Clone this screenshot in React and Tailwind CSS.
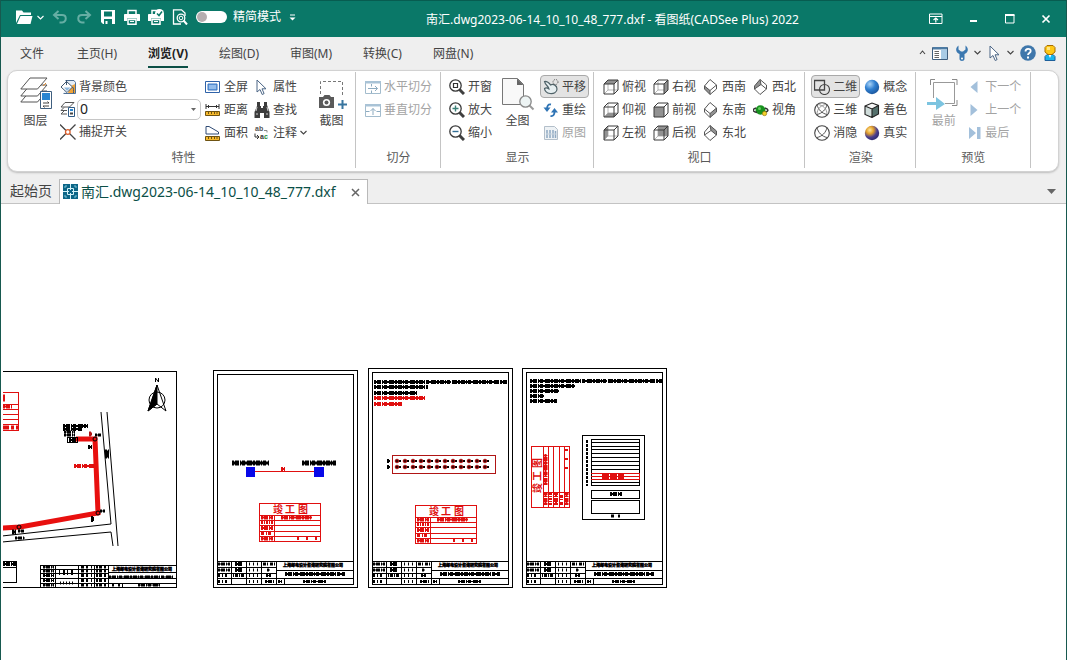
import React, { useState } from "react";
import clsx from "clsx";

const MENUS = ["主页(H)", "浏览(V)", "绘图(D)", "审图(M)", "转换(C)", "网盘(N)"];

const FILE_NAME = "南汇.dwg2023-06-14_10_10_48_777.dxf";

/* ---------- icons ---------- */

const Icon = ({ size = 16, width, className, children }) => (
  <svg
    width={width ?? size}
    height={size}
    viewBox={`0 0 ${width ?? size} ${size}`}
    fill="none"
    className={clsx("shrink-0", className)}
    aria-hidden="true"
  >
    {children}
  </svg>
);

const Chevron = ({ up, className }) => (
  <Icon size={7} className={className}>
    <path d={up ? "M1 5l2.500-3L6 5" : "M.5 2l3 3 3-3"} stroke="currentColor" strokeWidth="1.100" />
  </Icon>
);

const FolderIcon = () => (
  <Icon width={17}>
    <path d="M0 14V1.500h6L7.500 3.500H15V6H4z" fill="#fff" />
    <path d="M4.500 7H16.500L14.500 15H1z" fill="#fff" />
  </Icon>
);

const UndoIcon = ({ flip }) => (
  <Icon className={flip ? "-scale-x-100" : undefined}>
    <path d="M6.500 2L2 6l4.500 4M2.500 6H10c5 0 5 6.500 0 7.500H7.500" stroke="#66aea4" strokeWidth="2" />
  </Icon>
);

const SaveIcon = () => (
  <Icon>
    <path d="M1 1h14v14H3l-2-2z" fill="#fff" />
    <path d="M4 2.500h8v5H4zM4 10h8v5H4z" fill="#0a7868" />
    <path d="M5.500 12h2v3h-2z" fill="#fff" />
  </Icon>
);

const PrintIcon = ({ checked }) => (
  <Icon>
    <path d="M4 5V1.500h8V5" stroke="#fff" strokeWidth="1.500" />
    <path d="M1 5h14c.6 0 1 .4 1 1v6h-3V9.500H3V12H0V6c0-.6.4-1 1-1z" fill="#fff" />
    <path d="M4 10.500h8v4.700H4z" stroke="#fff" strokeWidth="1.500" />
    <path d="M6 12.500h4" stroke="#fff" />
    {checked && (
      <>
        <circle cx="11.500" cy="4.500" r="4.500" fill="#fff" />
        <path d="M9 4.500l2 2 3-4" stroke="#0a7868" strokeWidth="1.500" />
      </>
    )}
  </Icon>
);

const PreviewIcon = () => (
  <Icon>
    <path d="M9 15H1.500V.8h8L13 4v3" stroke="#fff" strokeWidth="1.300" />
    <circle cx="9" cy="9" r="3.800" stroke="#fff" strokeWidth="1.300" />
    <circle cx="9" cy="9" r="1.800" stroke="#fff" />
    <path d="M11.500 11.500l3.500 4" stroke="#fff" strokeWidth="2" />
  </Icon>
);

const RibbonToggleIcon = () => (
  <Icon width={14} size={12}>
    <path d="M.5 1h12.500v9.500H.5zM.5 3.500H13" stroke="#fff" />
    <path d="M6.800 9.500v-4M4.500 7l2.300-2 2.200 2" stroke="#fff" strokeWidth="1.200" />
  </Icon>
);

const PanelIcon = () => (
  <Icon>
    <path d="M.5 2.500h15v12H.5z" fill="#fff" stroke="#3f5f7f" />
    <path d="M1 2h14v2.500H1z" fill="#4d7ba3" />
    <path d="M9 4.500h6v9.500H9z" fill="#a9cce6" />
    <path d="M2.500 6.500H7M2.500 8.500H7M2.500 10.500H7M2.500 12.500H7" stroke="#666" />
  </Icon>
);

const WrenchIcon = () => (
  <Icon>
    <path
      d="M4.500.5v4L7 6.500h2l2.500-2v-4C15 3 14.500 7.500 10.500 9v5c0 2.500-5 2.500-5 0V9C1.500 7.500 1 3 4.500.5z"
      fill="#3b78b0"
    />
    <circle cx="8" cy="13.500" r="1" fill="#fff" />
  </Icon>
);

const CursorIcon = () => (
  <Icon>
    <path d="M3 1v12l3-2.500 2.200 5 1.900-.9-2.100-4.800H12z" fill="#fff" stroke="#4b6585" strokeLinejoin="round" />
  </Icon>
);

const HelpIcon = () => (
  <Icon>
    <circle cx="8" cy="8" r="7.800" fill="#3f77ab" />
    <path d="M5.500 6.500c0-3.500 5.200-3.500 5.200-.5C10.700 8 8 8 8 10" stroke="#fff" strokeWidth="1.800" />
    <path d="M7 11.500h2v2H7z" fill="#fff" />
  </Icon>
);

const PersonIcon = () => (
  <Icon>
    <path d="M3 15.500v-4l2-2h6l2 2v4z" fill="#19b5ee" stroke="#1c5f9b" />
    <path d="M6.500 9.500L8 13l1.500-3.500z" fill="#fff" />
    <path d="M5 .5h6l2 2V7l-3 2.500H6L3 7V2.500z" fill="#ffc815" stroke="#a86f00" />
    <path d="M5 2h3v3H5z" fill="#ffe684" />
  </Icon>
);

const LayersIcon = () => (
  <Icon size={32} className="overflow-visible">
    {[14, 8, 1].map((y) => (
      <path key={y} d={`M10 ${y}h17l-9.500 11H.8z`} fill="#fff" stroke="#555" />
    ))}
    <path d="M20.500 14.500h11v17h-11z" fill="#fff" stroke="#3f5f7f" />
    <path d="M22 16h8v7h-8z" fill="#2a86d1" />
    <path d="M23 26h6l-1.500-1.500M29 29h-6l1.500 1.500" stroke="#444" />
    <path d="M23 9l3-3" stroke="#e58a2b" />
  </Icon>
);

const PaintIcon = () => (
  <Icon>
    <path d="M5.500 1.500H14l1.500 2v11h-12" fill="#e6eef6" stroke="#4f6f94" />
    <path d="M11 7l4-2v9h-7z" fill="#f0a43a" />
    <path d="M6.500 2.500l6 5.500-5.500 5.500L1 8z" fill="#fff" stroke="#3f5670" />
    <path d="M4 8.500h6.500l-3.500 3.500z" fill="#8fb8dd" />
    <path d="M6.500 1v5M12.500 8c1.500 1 1 4 1 6" stroke="#3f5670" />
  </Icon>
);

const LayerListIcon = () => (
  <Icon>
    <path d="M5 1.500h9L9.500 6H1zM1 9.500h6M4 6.500l-3 3M1 13h6M4 10l-3 3" stroke="#555" />
    <path d="M8.500 6.500h6v9h-6z" fill="#fff" stroke="#2f5a85" />
    <path d="M10 8h3v2h-3z" fill="#2a86d1" />
    <path d="M10 12.500h3" stroke="#444" strokeWidth="2" />
  </Icon>
);

const SnapIcon = () => (
  <Icon>
    <path d="M0 .5l6 6M15.500.5l-6 6M0 15.500l6-6M15.500 15.500l-6-6" stroke="#444" strokeWidth="1.300" />
    <circle cx="7.800" cy="8" r="2.300" stroke="#e0602c" strokeWidth="1.300" />
  </Icon>
);

const FullScreenIcon = () => (
  <Icon>
    <path d="M.5 2.500h14v11H.5z" fill="#fff" stroke="#2f62a8" />
    <path d="M3 5h9v6H3z" fill="#6fa5e3" stroke="#3b74bf" />
    <path d="M4 7h7M4 9h7" stroke="#b8d5f4" />
  </Icon>
);

const Ruler = ({ y }) => (
  <>
    <path d={`M.5 ${y}.5h14v4H.5z`} fill="#f6b92d" stroke="#6e5312" />
    <path d={`M3.500 ${y + 1}v2M6.500 ${y + 1}v2M9.500 ${y + 1}v2M12 ${y + 1}v2`} stroke="#6e5312" />
  </>
);

const DistanceIcon = () => (
  <Icon>
    <path d="M1 4.500h13M1 2v5M14 2v5M3.500 3v3M11.500 3v3" stroke="#333" />
    <Ruler y={9} />
  </Icon>
);

const AreaIcon = () => (
  <Icon>
    <path d="M1 9V1.500h3L13.500 7v2z" fill="#fff" stroke="#2f4a74" />
    <Ruler y={11} />
  </Icon>
);

const BinocularsIcon = () => (
  <Icon>
    <path d="M3 0h3v4h1v2h2V4h1V0h3v3l2.500 7v6H10v-5H6v5H.5v-6L3 4z" fill="#3c3c3c" />
    <path d="M3 5l-1 4M13 5l1 4M2 12h2M12 12h2" stroke="#cfcfcf" />
  </Icon>
);

const NoteIcon = () => (
  <Icon className="overflow-visible">
    <g className="font-['Liberation_Sans',sans-serif] text-[7px] font-bold">
      <text x="1" y="6" fill="#555">ab</text>
      <text x="6" y="14" fill="#333">
        a<tspan fill="#1b8a36">c</tspan>
      </text>
    </g>
    <path d="M1 8.500V12h3.500M3 10l2 2-2 2" stroke="#333" />
    <path d="M10 5.500h3v2" stroke="#888" />
  </Icon>
);

const CaptureIcon = () => (
  <Icon size={32} className="overflow-visible">
    <path d="M4.500 17V4.500h22V20" stroke="#777" strokeDasharray="3 2" />
    <path d="M3 20h4l1.500-2h5l1.500 2h3v11H3z" fill="#5a5a5a" />
    <circle cx="10.500" cy="25.500" r="3.600" fill="#fff" />
    <circle cx="10.500" cy="25.500" r="2" fill="#5a5a5a" />
    <path d="M26.500 23v9M22 27.500h9" stroke="#39759f" strokeWidth="2" />
  </Icon>
);

const SplitIcon = ({ vertical }) => (
  <Icon>
    <path d="M.5 2.500h15v12H.5z" fill="#fff" stroke="#a3bccd" />
    <path d="M0 2h16v2.500H0z" fill="#a9c3d6" />
    {vertical ? (
      <path d="M1 9.500h3.500M11.500 9.500H15M8 13V6.500M5.500 9L8 6.500 10.500 9" stroke="#8dabc0" />
    ) : (
      <path d="M6.500 5v2.500M6.500 11.500V14M3 9.500h9.500M10 7l2.500 2.500L10 12" stroke="#8dabc0" />
    )}
  </Icon>
);

const ZoomIcon = ({ kind }) => (
  <Icon>
    <path d="M10.500 10.500l4.500 4.500" stroke="#3f3f3f" strokeWidth="3" />
    <circle cx="6.500" cy="6.500" r="5.700" fill="#fff" stroke="#3a3a3a" strokeWidth="1.300" />
    {kind === "window" && <path d="M4.500 4.500h4v4h-4z" stroke="#333" strokeWidth="1.200" />}
    {kind === "in" && <path d="M3.500 6.500h6M6.500 3.500v6" stroke="#3c8078" strokeWidth="1.400" />}
    {kind === "out" && <path d="M3.500 6.500h6" stroke="#336f96" strokeWidth="1.400" />}
  </Icon>
);

const FitPageIcon = () => (
  <Icon size={32} className="overflow-visible">
    <path d="M.5 1.500h15l6 6v20H.5z" fill="#f8f8f8" stroke="#777" />
    <path d="M15 1.500v6.500h6.500z" fill="#666" />
    <path d="M27.500 28.500l4 4" stroke="#999" strokeWidth="2" />
    <circle cx="23.500" cy="24.500" r="5.700" fill="#edf4f4" stroke="#888" strokeWidth="1.300" />
  </Icon>
);

const PanIcon = () => (
  <Icon>
    <path
      d="M1.500 2.500c2-.5 5 1.500 6 3.500 3-1.500 6.500.5 6.500 4 0 3.500-3.500 5-7 4.500C3.500 14 1.500 11.500 1.500 9.500 3 8.500 4.500 9 6 10c0-2.500-4-4-4.500-7.500z"
      fill="#e6eef0"
      stroke="#4f6268"
      strokeWidth="1.200"
    />
    <circle cx="12.500" cy="3" r="2.500" stroke="#555" strokeDasharray="1 1" />
  </Icon>
);

const RedrawIcon = () => (
  <Icon>
    <path d="M8 2.500C5 2 4 4 4 7" stroke="#2f74b5" strokeWidth="1.800" />
    <path d="M.5 5.500h7L4 10z" fill="#2f74b5" />
    <path d="M7.500 14c3 .5 4-1.500 4-4.500" stroke="#2f74b5" strokeWidth="1.800" />
    <path d="M8 10.500h7L11.500 6z" fill="#2f74b5" />
  </Icon>
);

const OriginalIcon = () => (
  <Icon>
    <path d="M1.500 1.500h10l3 3v10h-13z" fill="#eef2f5" stroke="#b3bfca" />
    <path d="M4 5v8M7 5v8M10 5v8M12.500 6v7" stroke="#8fa9c2" strokeWidth="1.500" />
    <path d="M3 9h10" stroke="#c9d4de" />
  </Icon>
);

const CUBE_FACES = {
  top: "M1 5l4-4h10l-4 4z",
  bottom: "M1 15l4-4h10l-4 4z",
  left: "M1 5l4-4v10l-4 4z",
  right: "M11 5l4-4v10l-4 4z",
  front: "M1 5h10v10H1z",
  back: "M5 1h10v10H5z",
};

const CubeIcon = ({ face }) => (
  <Icon>
    <path d="M1 5h10v10H1zM1 5l4-4h10l-4 4M15 1v10l-4 4" fill="#fff" />
    <path d={CUBE_FACES[face]} fill="#929292" />
    {face !== "front" && <path d="M5 1v10M5 11h10M5 11l-4 4" stroke="#999" strokeWidth=".7" />}
    <path d="M1 5h10v10H1zM1 5l4-4h10l-4 4M15 1v10l-4 4" stroke="#3a3a3a" />
  </Icon>
);

const ISO_SHADES = {
  sw: "M1.500 7L7 11.500v4L1.500 10z",
  se: "M7 11.500L13.500 6v4L7 15.500z",
  ne: "M7 .5L13.500 6v4L8 5.500z",
  nw: "M7 .5L1.500 7v3L8 5.500z",
};

const IsoIcon = ({ corner }) => {
  const below = corner === "sw" || corner === "se";
  return (
    <Icon>
      <path d="M7 .5L13.500 6v4L7 15.500 1.500 10V7z" fill="#fff" />
      <path d={ISO_SHADES[corner]} fill="#929292" />
      <path
        d={below ? "M1.500 7L7 11.500 13.500 6M7 11.500v4" : "M1.500 10L8 5.500l5.500 4.500M8 5.500L7 .5"}
        stroke="#555"
      />
      <path d="M7 .5L13.500 6v4L7 15.500 1.500 10V7z" stroke="#555" />
    </Icon>
  );
};

const OrbitIcon = () => (
  <Icon>
    <ellipse cx="7.500" cy="8" rx="5" ry="4.700" fill="#18911f" />
    <circle cx="6.500" cy="6.500" r="1.500" fill="#66d05d" />
    <path d="M3 6C-1.500 7.500-.5 9.500 4 10.500M12 6c4.500 1.500 3.500 3.500-1 4.500" stroke="#333" strokeWidth="1.400" />
    <circle cx="11.500" cy="11.500" r="2.200" fill="#f4cf2c" stroke="#806b00" strokeWidth=".6" />
  </Icon>
);

const TwoDIcon = () => (
  <Icon>
    <circle cx="10.500" cy="10.500" r="5" stroke="#444" strokeWidth="1.100" />
    <path d="M.5 1.500h10v9.500H.5z" stroke="#444" strokeWidth="1.300" />
  </Icon>
);

const WireIcon = ({ hidden }) => (
  <Icon>
    <circle cx="8" cy="8" r="7.300" stroke="#444" strokeWidth="1.100" />
    <path d="M3 2.500c1 5 5 9 10 10M13 2.500c-1 5-5 9-10 10" stroke="#555" />
    {!hidden && <path d="M3 12c0-5 4-9 9-9.500M13 12c0-5-4-9-9-9.500" stroke="#999" />}
  </Icon>
);

const BallIcon = ({ id, stops }) => (
  <Icon>
    <defs>
      <radialGradient id={id} cx="0.350" cy="0.300" r="0.750">
        {stops.map((c, i) => (
          <stop key={c} offset={i / (stops.length - 1)} stopColor={c} />
        ))}
      </radialGradient>
    </defs>
    <circle cx="8" cy="8" r="7.200" fill={`url(#${id})`} />
  </Icon>
);

const ShadedCubeIcon = () => (
  <Icon>
    <path d="M1 4l7-3 6.500 2.500L8 7z" fill="#f7f7f7" />
    <path d="M1 4l7 3v8.500l-7-3z" fill="#cfdcda" />
    <path d="M8 7l6.500-3.500v8.500L8 15.500z" fill="#54706c" />
    <path d="M1 4l7-3 6.500 2.500v8.500L8 15.500l-7-3zM1 4l7 3 6.500-3.500M8 7v8.500" stroke="#222" strokeWidth="1.100" />
  </Icon>
);

const FirstIcon = () => (
  <Icon size={32} className="overflow-visible">
    <path d="M2.500 8V2.500H7M24 2.500h5V8M29 23v5.500h-5" stroke="#8a8a8a" />
    <path d="M5.500 21V5.500h21v21H17" stroke="#999" />
    <path d="M-1 25h9v-5l9 7-9 6v-5h-9z" fill="#7cc4e0" />
  </Icon>
);

const StepIcon = ({ kind }) => (
  <Icon width={13} size={12}>
    {kind === "next" && <path d="M8.500 0v12L1.500 6z" fill="#a3c0db" />}
    {kind === "prev" && <path d="M1.500 0v12l7-6z" fill="#a3c0db" />}
    {kind === "last" && <path d="M0 0v12l7-6zM8 0h3.500v12H8z" fill="#a3c0db" />}
  </Icon>
);

const DocIcon = () => (
  <Icon>
    <path d="M0 0h15v15H0z" fill="#0c6687" />
    <path d="M4.500 4.500h6v6h-6zM7.500 0v6M7.500 9v6M0 7.500h6M9 7.500h6" stroke="#d4f2f8" />
    <path d="M2 4V2h2M11 2h2v2M13 11v2h-2M4 13H2v-2" stroke="#7fc5d8" />
  </Icon>
);

/* ---------- ribbon ---------- */

const RibbonGroup = ({ label, className, children }) => (
  <section className={clsx("mt-px mb-[3px] flex flex-col border-r border-[#c4c4c4] pt-[3px]", className)}>
    <div className="flex gap-px">{children}</div>
    <h2 className="flex h-6 items-center justify-center pt-1 text-[#5a5a5a]">{label}</h2>
  </section>
);

const Column = ({ className, children }) => <div className={clsx("flex flex-col", className)}>{children}</div>;

const Tool = ({ icon, label, active, disabled, menu }) => (
  <button
    type="button"
    disabled={disabled}
    className={clsx(
      "flex h-[23px] items-center gap-[3px] rounded border px-[2px] whitespace-nowrap",
      active ? "border-[#a9a9a9] bg-[#e3e3e3]" : "border-transparent",
      disabled ? "text-[#a3a3a3]" : "text-[#444]"
    )}
  >
    {icon}
    {label}
    {menu && <Chevron />}
  </button>
);

const BigTool = ({ icon, label, disabled }) => (
  <button
    type="button"
    disabled={disabled}
    className={clsx("flex w-[43px] flex-col items-center gap-[2px] pt-[2px]", disabled ? "text-[#a3a3a3]" : "text-[#444]")}
  >
    {icon}
    <span className="leading-5">{label}</span>
  </button>
);

const Ribbon = () => (
  <div className="mr-[7px] ml-[6px] flex rounded-[10px] border border-[#d2d2d2] bg-white shadow-[0_1px_2px_#bdbdbd]">
    <RibbonGroup label="特性" className="pr-[2px] pl-[6px]">
      <div className="flex">
        <BigTool icon={<LayersIcon />} label="图层" />
        <Column className="w-36">
          <Tool icon={<PaintIcon />} label="背景颜色" />
          <div className="flex h-[22px] items-center gap-px pl-[3px]">
            <LayerListIcon />
            <div className="flex h-[21px] flex-1 items-center rounded-[5px] border border-[#c6c6c6] bg-white pr-1">
              <select aria-label="当前图层" className="flex-1 appearance-none pl-[2px] text-sm leading-4 text-[#222]">
                <option>0</option>
              </select>
              <Icon width={5} size={3}>
                <path d="M0 0h5L2.500 3z" fill="#666" />
              </Icon>
            </div>
          </div>
          <Tool icon={<SnapIcon />} label="捕捉开关" />
        </Column>
      </div>
      <div className="flex">
        <Column>
          <Tool icon={<FullScreenIcon />} label="全屏" />
          <Tool icon={<DistanceIcon />} label="距离" />
          <Tool icon={<AreaIcon />} label="面积" />
        </Column>
        <Column className="w-[58px]">
          <Tool icon={<CursorIcon />} label="属性" />
          <Tool icon={<BinocularsIcon />} label="查找" />
          <Tool icon={<NoteIcon />} label="注释" menu />
        </Column>
      </div>
      <BigTool icon={<CaptureIcon />} label="截图" />
    </RibbonGroup>

    <RibbonGroup label="切分" className="pr-[5px] pl-[6px]">
      <Column>
        <Tool icon={<SplitIcon />} label="水平切分" disabled />
        <Tool icon={<SplitIcon vertical />} label="垂直切分" disabled />
        <div className="h-[23px]" />
      </Column>
    </RibbonGroup>

    <RibbonGroup label="显示" className="pr-[4px] pl-[5px]">
      <Column>
        <Tool icon={<ZoomIcon kind="window" />} label="开窗" />
        <Tool icon={<ZoomIcon kind="in" />} label="放大" />
        <Tool icon={<ZoomIcon kind="out" />} label="缩小" />
      </Column>
      <BigTool icon={<FitPageIcon />} label="全图" />
      <Column>
        <Tool icon={<PanIcon />} label="平移" active />
        <Tool icon={<RedrawIcon />} label="重绘" />
        <Tool icon={<OriginalIcon />} label="原图" disabled />
      </Column>
    </RibbonGroup>

    <RibbonGroup label="视口" className="pr-[5px] pl-[6px]">
      <Column>
        <Tool icon={<CubeIcon face="top" />} label="俯视" />
        <Tool icon={<CubeIcon face="bottom" />} label="仰视" />
        <Tool icon={<CubeIcon face="left" />} label="左视" />
      </Column>
      <Column>
        <Tool icon={<CubeIcon face="right" />} label="右视" />
        <Tool icon={<CubeIcon face="front" />} label="前视" />
        <Tool icon={<CubeIcon face="back" />} label="后视" />
      </Column>
      <Column>
        <Tool icon={<IsoIcon corner="sw" />} label="西南" />
        <Tool icon={<IsoIcon corner="se" />} label="东南" />
        <Tool icon={<IsoIcon corner="ne" />} label="东北" />
      </Column>
      <Column>
        <Tool icon={<IsoIcon corner="nw" />} label="西北" />
        <Tool icon={<OrbitIcon />} label="视角" />
      </Column>
    </RibbonGroup>

    <RibbonGroup label="渲染" className="pr-[5px] pl-[6px]">
      <Column>
        <Tool icon={<TwoDIcon />} label="二维" active />
        <Tool icon={<WireIcon />} label="三维" />
        <Tool icon={<WireIcon hidden />} label="消隐" />
      </Column>
      <Column>
        <Tool icon={<BallIcon id="ball-blue" stops={["#a9d3f7", "#2f7fd0", "#1b559b"]} />} label="概念" />
        <Tool icon={<ShadedCubeIcon />} label="着色" />
        <Tool icon={<BallIcon id="ball-gold" stops={["#ffe9a0", "#e3a02c", "#4b3f8f", "#2c2a6b"]} />} label="真实" />
      </Column>
    </RibbonGroup>

    <RibbonGroup label="预览" className="pr-[6px] pl-[6px]">
      <BigTool icon={<FirstIcon />} label="最前" disabled />
      <Column>
        <Tool icon={<StepIcon kind="next" />} label="下一个" disabled />
        <Tool icon={<StepIcon kind="prev" />} label="上一个" disabled />
        <Tool icon={<StepIcon kind="last" />} label="最后" disabled />
      </Column>
    </RibbonGroup>
  </div>
);

/* ---------- drawing ---------- */

// A line of CAD annotation, far too small to read at this zoom
const Scrawl = ({ x, y, w, h = 3, color = "#000", dash }) => (
  <g stroke={color} shapeRendering="auto">
    <path d={`M${x} ${y}h${w}`} strokeWidth={h + 1} strokeDasharray={dash ?? "2 1 4 1 1 1 3 2 5 1"} />
    {!dash && <path d={`M${x} ${y}h${w}`} strokeWidth={h - 1} strokeDasharray="7 1 4 0 9 1 3 1" />}
  </g>
);

const Stamp = ({ transform }) => (
  <g transform={transform} stroke="#e00f0f">
    <path d="M0 0h61v38H0zM0 12h61M0 17h61M0 22h61M0 28h61M0 33h61M15 12v26" />
    <g fill="#e00f0f" stroke="none" className="text-[10px] font-bold">
      <text x="14" y="10">竣</text>
      <text x="26" y="10">工</text>
      <text x="39" y="10">图</text>
    </g>
    <Scrawl x={2} y={14.500} w={12} color="#e00f0f" />
    <Scrawl x={2} y={19.500} w={12} h={2} color="#e00f0f" dash="2 1 1 1" />
    <Scrawl x={2} y={25} w={12} color="#e00f0f" />
    <Scrawl x={2} y={30.500} w={12} h={2} color="#e00f0f" dash="3 2 1 1" />
    <Scrawl x={2} y={35.500} w={12} color="#e00f0f" />
    <Scrawl x={22} y={14.500} w={31} color="#e00f0f" />
    <Scrawl x={38} y={35.500} w={22} h={2} color="#e00f0f" dash="2 7" />
  </g>
);

const TitleBlock = ({ x }) => (
  <g transform={`translate(${x} 561)`} stroke="#000">
    <path d="M0 0h136M0 6h59M0 12h59M0 17h136M59 9h77M14 0v23M29 0v23M44 0v23M59 0v23M67 17v6" />
    <Scrawl x={1} y={3} w={12} h={2} />
    <Scrawl x={1} y={9} w={12} h={2} />
    <Scrawl x={1} y={14.500} w={11} h={2} dash="2 2 1 2" />
    <Scrawl x={1} y={20.500} w={11} h={2} dash="2 2 1 2" />
    <Scrawl x={18} y={3} w={8} />
    <Scrawl x={18} y={9} w={7} />
    <Scrawl x={16} y={14.500} w={12} h={2} dash="1 1 3 1" />
    {[3, 9, 14.500, 20.500].map((y) => (
      <Scrawl key={y} x={32} y={y} w={10} h={2} dash="1 3" />
    ))}
    <Scrawl x={46} y={3} w={12} h={2} dash="3 1 1 2" />
    <Scrawl x={50} y={9} w={3} h={2} />
    <Scrawl x={49} y={14.500} w={5} h={2} />
    <Scrawl x={48} y={20.500} w={9} h={2} />
    <Scrawl x={61} y={20.500} w={4} h={2} />
    <text x="66" y="6" className="text-[4px] font-bold" fill="#000" strokeWidth=".4">
      上海邮电设计咨询研究院有限公司
    </text>
    <Scrawl x={68} y={13} w={60} />
    <Scrawl x={86} y={20.500} w={23} h={2} />
  </g>
);

const Sheet = ({ x, y, inset, children }) => (
  <>
    <path
      d={`M${x} ${y}h144V587h-144zM${x + inset} ${y + 4}h${144 - inset * 2}V584h-${144 - inset * 2}z`}
      fill="#fff"
      stroke="#000"
    />
    <TitleBlock x={x + inset} />
    {children}
  </>
);

const SitePlan = () => (
  <g stroke="#000">
    <path d="M2 371h174v216H2" />
    {/* partial stamp cut off by the view */}
    <path d="M2 392h16v38H2M2 404h16M2 409h16M2 414h16M2 419h16M2 424h16" stroke="#e00f0f" />
    <Scrawl x={3} y={406.500} w={9} color="#e00f0f" />
    <Scrawl x={3} y={427.500} w={15} color="#e00f0f" dash="6 2 3 2" />
    <Scrawl x={3} y={398} w={2} h={6} color="#e00f0f" />

    {/* roads */}
    <path d="M101 412L111 524L2 536M107 412L118 546M2 542L111 532L113 546" shapeRendering="auto" />

    {/* cable route */}
    <path d="M76 439H95L98 513L20 527L2 528" stroke="#e8100f" strokeWidth="5" shapeRendering="auto" />
    <circle cx="95" cy="439" r="2" shapeRendering="auto" />
    <circle cx="98" cy="513" r="2" shapeRendering="auto" />
    <circle cx="19" cy="527" r="2" shapeRendering="auto" />
    <path d="M67 437h10v5H67z" />
    <Scrawl x={63} y={426} w={25} />
    <Scrawl x={63} y={429} w={19} />
    <Scrawl x={64} y={432} w={11} h={2} />
    <Scrawl x={64} y={435} w={11} h={2} />
    <Scrawl x={69} y={440} w={8} />
    <Scrawl x={74} y={466} w={20} color="#e00f0f" />
    <Scrawl x={95} y={435} w={6} h={2} />
    <Scrawl x={89} y={434} w={3} h={4} color="#b01515" />
    <Scrawl x={88} y={447} w={4} />
    <Scrawl x={100} y={511} w={5} h={2} />
    <Scrawl x={91} y={519} w={3} h={5} />
    <Scrawl x={105} y={454} w={4} h={8} />
    <Scrawl x={12} y={532} w={4} h={4} />
    <Scrawl x={18} y={531} w={6} h={2} />
    <Scrawl x={15} y={538} w={10} h={2} />

    {/* north arrow */}
    <g shapeRendering="auto">
      <circle cx="157" cy="400" r="8" />
      <path d="M157 385l-9 26 9-7 9 7z" />
      <path d="M157 385l-9 26 9-7z" fill="#000" />
      <path d="M155.500 382v-4l3 4v-4" />
    </g>

    {/* legend and title block */}
    <path d="M2 561h14v21H2M2 567h14" />
    <Scrawl x={3} y={564} w={13} />
    <path d="M40 565h136M40 569h68M40 573h68M40 578h136M40 583h136M108 572h68M40 565v22M55 565v22M78 565v22M94 565v22M108 565v22M122 583v4" />
    {[567, 571, 575.500, 580.500, 585].map((y) => (
      <React.Fragment key={y}>
        <Scrawl x={43} y={y} w={11} h={2} />
        <Scrawl x={81} y={y} w={11} h={2} dash="3 2 2 3" />
        <Scrawl x={96} y={y} w={11} h={2} dash="2 1 3 2" />
      </React.Fragment>
    ))}
    <Scrawl x={59} y={572} w={14} h={5} dash="1 3 2 2" />
    <Scrawl x={60} y={583} w={13} h={2} dash="1 2" />
    <text x="112" y="571" className="text-[4px] font-bold" fill="#000" strokeWidth=".4">
      上海邮电设计咨询研究院有限公司
    </text>
    <Scrawl x={109} y={577} w={64} h={2} />
    <Scrawl x={138} y={585} w={22} h={2} />
    <Scrawl x={112} y={585} w={8} h={2} dash="2 4" />
  </g>
);

const Drawing = () => (
  <svg width="1063" height="456" viewBox="3 204 1063 456" fill="none" shapeRendering="crispEdges" className="shrink-0">
    <title>南汇工程竣工图</title>
    <SitePlan />

    <Sheet x={213} y={370} inset={4}>
      <path d="M251 471h68" stroke="#e00f0f" />
      <path d="M246 467h9v10h-9zM314 467h10v10h-10z" fill="#0808e8" />
      <Scrawl x={281} y={469} w={4} color="#e00f0f" />
      <Scrawl x={232} y={463} w={37} h={4} />
      <Scrawl x={302} y={463} w={34} h={4} />
      <Stamp transform="translate(259 503)" />
    </Sheet>

    <Sheet x={368} y={368} inset={4}>
      <Scrawl x={374} y={382} w={133} />
      <Scrawl x={374} y={387} w={54} />
      <Scrawl x={374} y={393} w={43} />
      <Scrawl x={374} y={398} w={51} color="#e00f0f" />
      <Scrawl x={374} y={404} w={28} color="#e00f0f" />
      <path d="M392 455h103v18H392z" stroke="#b01515" />
      {[461, 467].map((y) => (
        <g key={y} shapeRendering="auto">
          <path d={`M395 ${y}h96`} stroke="#000" strokeWidth="2" strokeDasharray="6 2" />
          {[397, 405, 413, 421, 429, 437, 445, 453, 461, 469, 477, 485].map((x) => (
            <circle key={x} cx={x} cy={y} r="1.800" fill="#3a0505" stroke="#b01515" />
          ))}
          <Scrawl x={387} y={y} w={3} />
        </g>
      ))}
      <Stamp transform="translate(415 505)" />
    </Sheet>

    <Sheet x={522} y={368} inset={4}>
      <Scrawl x={530} y={381} w={132} />
      <Scrawl x={530} y={386} w={45} />
      <Scrawl x={530} y={391} w={29} />
      <Scrawl x={530} y={396} w={14} />
      <Scrawl x={530} y={401} w={27} />
      <Stamp transform="translate(531 507) rotate(-90)" />
      <path
        d="M582 435h62v84h-62zM591 439h48v46h-48zM591 442h48M591 446h48M591 449h48M591 453h48M591 457h48M591 461h48M591 465h48M591 469h48M591 482h48M591 490h48v8h-48zM591 500h48v13h-48z"
        stroke="#000"
      />
      <path d="M586.500 440v46" stroke="#000" strokeWidth="2" strokeDasharray="3 1" />
      <path d="M591 473h48v6h-48M591 476h48" stroke="#e00f0f" />
      <Scrawl x={602} y={476} w={22} h={5} color="#e00f0f" dash="7 1" />
      <Scrawl x={610} y={494} w={12} />
      <Scrawl x={611} y={516} w={9} h={2} dash="3 4" />
    </Sheet>
  </svg>
);

/* ---------- window ---------- */

const TitleBar = () => {
  const [compact, setCompact] = useState(false);

  return (
    <header className="-mx-px flex h-[37px] items-center border-t border-[#075c50] bg-[#0a7868] pr-4 pl-4 text-white">
      <div className="flex items-center gap-2 pb-1">
        <button type="button" aria-label="打开" className="flex items-center gap-1">
          <FolderIcon />
          <Chevron />
        </button>
        <button type="button" aria-label="撤销">
          <UndoIcon />
        </button>
        <button type="button" aria-label="重做">
          <UndoIcon flip />
        </button>
        <button type="button" aria-label="保存">
          <SaveIcon />
        </button>
        <button type="button" aria-label="打印">
          <PrintIcon />
        </button>
        <button type="button" aria-label="批量打印">
          <PrintIcon checked />
        </button>
        <button type="button" aria-label="打印预览">
          <PreviewIcon />
        </button>
        <label className="flex items-center gap-[6px]">
          <input
            type="checkbox"
            checked={compact}
            onChange={(e) => setCompact(e.target.checked)}
            className="flex h-3 w-[31px] appearance-none items-center rounded-full bg-white px-px before:block before:size-[10px] before:rounded-full before:bg-[#b5aeb0] before:content-[''] checked:justify-end"
          />
          精简模式
        </label>
        <button type="button" aria-label="自定义工具栏">
          <Icon size={7}>
            <path d="M1 1h5" stroke="#fff" />
            <path d="M.5 3.500h6l-3 3z" fill="#fff" />
          </Icon>
        </button>
      </div>

      <h1 className="flex-1 pt-px text-center">{FILE_NAME} - 看图纸(CADSee Plus) 2022</h1>

      <div className="flex items-center gap-[26px]">
        <button type="button" aria-label="功能区选项">
          <RibbonToggleIcon />
        </button>
        <button type="button" aria-label="最小化">
          <Icon size={10}>
            <path d="M1 7h7" stroke="#fff" strokeWidth="2" />
          </Icon>
        </button>
        <button type="button" aria-label="最大化">
          <Icon size={10}>
            <path d="M.5 1h8.500v8H.5z" stroke="#fff" />
            <path d="M0 1h9.500" stroke="#fff" strokeWidth="2" />
          </Icon>
        </button>
        <button type="button" aria-label="关闭">
          <Icon size={10}>
            <path d="M1.500 1.500l7 7M8.500 1.500l-7 7" stroke="#fff" strokeWidth="1.700" />
          </Icon>
        </button>
      </div>
    </header>
  );
};

const MenuBar = () => (
  <nav className="flex h-[33px] items-center justify-between pr-2 pl-[19px]">
    <div className="flex items-center gap-[33px]">
      <button type="button">文件</button>
      <div className="flex items-center gap-[31px]">
        {MENUS.map((label) => (
          <button
            key={label}
            type="button"
            className={clsx(
              "border-b-2 pt-1 pb-[2px] leading-5",
              label === "浏览(V)" ? "border-[#0c4f46] font-bold text-[#222]" : "border-transparent"
            )}
          >
            {label}
          </button>
        ))}
      </div>
    </div>
    <div className="flex items-center gap-[6px] pb-[2px]">
      <button type="button" aria-label="折叠功能区">
        <Chevron up />
      </button>
      <button type="button" aria-label="面板">
        <PanelIcon />
      </button>
      <button type="button" aria-label="工具" className="flex items-center gap-1">
        <WrenchIcon />
        <Chevron />
      </button>
      <button type="button" aria-label="选择" className="flex items-center gap-1">
        <CursorIcon />
        <Chevron />
      </button>
      <button type="button" aria-label="帮助">
        <HelpIcon />
      </button>
      <button type="button" aria-label="账户">
        <PersonIcon />
      </button>
    </div>
  </nav>
);

const TabBar = () => (
  <div className="mt-[7px] flex h-[25px] text-sm leading-6">
    <button type="button" className="border-b border-[#c3c3c3] pr-[7px] pl-[9px] text-[#444]">
      起始页
    </button>
    <div className="flex items-center border border-b-0 border-[#b9b9b9] bg-white pr-[7px] pl-[3px] text-[#0b4f47]">
      <button type="button" className="flex items-center gap-[2px] whitespace-nowrap">
        <DocIcon />
        {FILE_NAME}
      </button>
      <button type="button" aria-label="关闭标签" className="ml-[15px]">
        <Icon size={9}>
          <path d="M1 1l7 7M8 1L1 8" stroke="#666" strokeWidth="1.500" />
        </Icon>
      </button>
    </div>
    <div className="flex flex-1 items-center justify-end border-b border-[#c3c3c3] pr-[10px]">
      <button type="button" aria-label="标签列表">
        <Icon width={9} size={5}>
          <path d="M0 0h9L4.500 5z" fill="#666" />
        </Icon>
      </button>
    </div>
  </div>
);

const App = () => (
  <div className="flex min-h-screen flex-col overflow-hidden border-x border-[#17594f] bg-[#efefef] font-['Noto_Sans','Noto_Sans_CJK_SC',sans-serif] text-xs text-[#444]">
    <TitleBar />
    <MenuBar />
    <Ribbon />
    <TabBar />
    <main className="flex flex-1 overflow-hidden bg-white pl-[2px]">
      <Drawing />
    </main>
  </div>
);

export default App;
